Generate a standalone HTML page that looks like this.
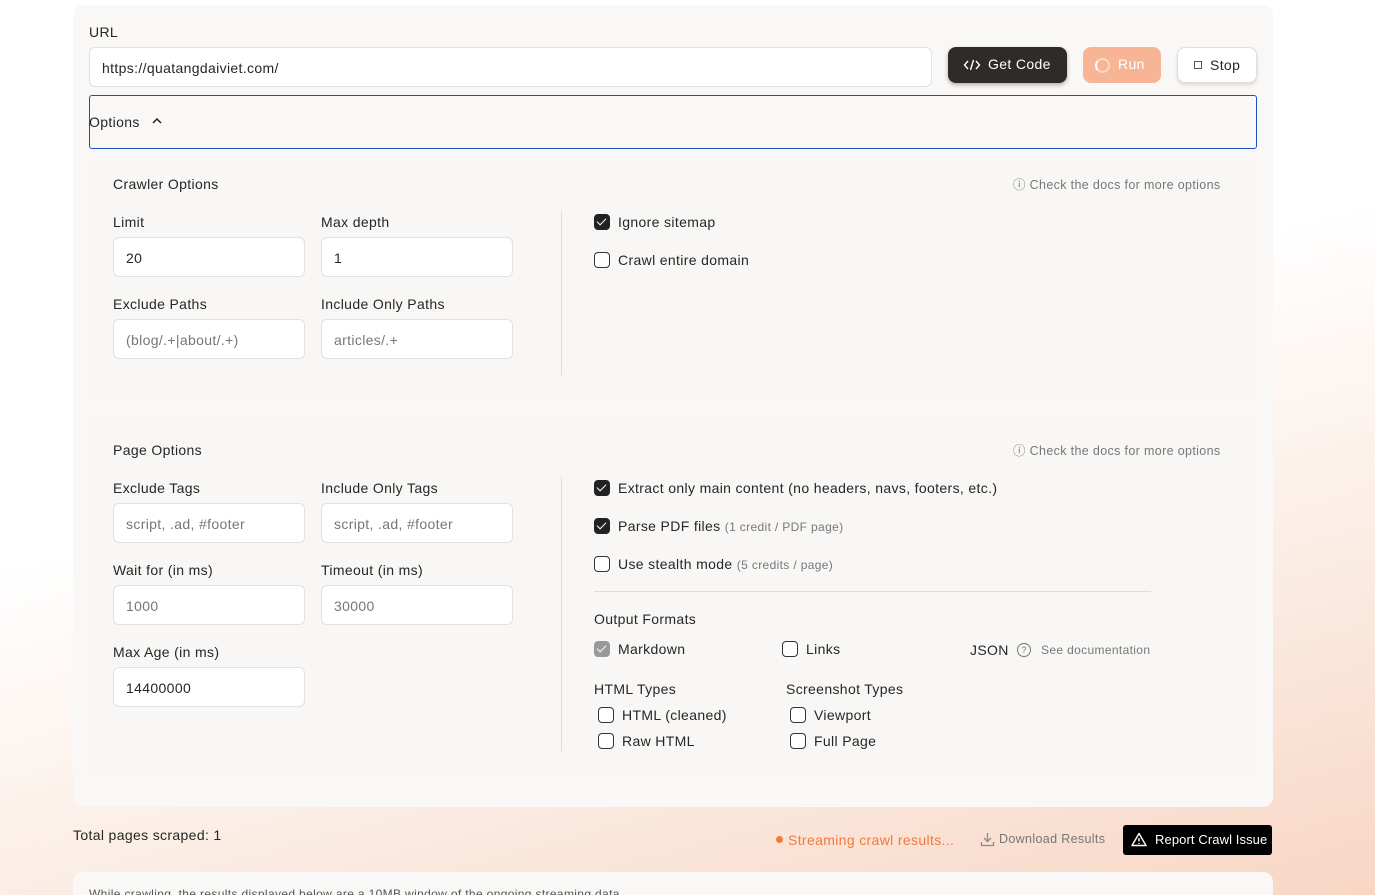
<!DOCTYPE html>
<html><head><meta charset="utf-8"><style>
*{box-sizing:border-box;margin:0;padding:0}
html{width:1375px;height:895px;overflow:hidden}
body{width:1375px;height:895px;overflow:hidden;font-family:"Liberation Sans",sans-serif;color:#262626;font-size:14px;position:relative;letter-spacing:0.35px;
background:linear-gradient(165deg,#fff 0%,#fff 45%,#fbeee6 70%,#f8d6c4 100%);}
.a{position:absolute}
.card{background:#f9f8f6;border-radius:10px}
.sec{background:#f8f7f5;border-radius:8px}
.inp{position:absolute;background:#fff;border:1px solid #e3e1df;border-radius:6px;height:40px;padding:0 12px;line-height:40px;font-size:14px;color:#262626}
.ph{color:#777}
.cb{position:absolute;width:16px;height:16px;border:1.5px solid #333;border-radius:4px;background:#fff}
.cb.on{background:#222;border-color:#222}
.cb.on::after{content:"";position:absolute;left:4px;top:1px;width:4px;height:8px;border:solid #fff;border-width:0 1.5px 1.5px 0;transform:rotate(45deg)}
.cb.gr{background:#999;border-color:#999}
.cb.gr::after{content:"";position:absolute;left:4px;top:1px;width:4px;height:8px;border:solid #fff;border-width:0 1.5px 1.5px 0;transform:rotate(45deg)}
.t{position:absolute;white-space:nowrap;font-size:14px}
.s{color:#777;font-size:12px}
.d{color:#777;font-size:12.5px}
</style></head><body>
<div class="a card" style="left:73px;top:5px;width:1200px;height:802px"></div>
<div class="t" style="left:89px;top:24px">URL</div>
<div class="inp" style="left:89px;top:47px;width:843px">https://quatangdaiviet.com/</div>
<div class="a" style="left:948px;top:47px;width:119px;height:36px;background:#2f2b28;border-radius:8px;color:#fff;box-shadow:0 2px 4px rgba(0,0,0,.3)">
<svg class="a" style="left:15px;top:11px" width="18" height="14"><path d="M5 3 L1.5 7 L5 11 M13 3 L16.5 7 L13 11 M10.5 2 L7.5 12" stroke="#fff" stroke-width="1.4" fill="none"/></svg>
<span class="t" style="left:40px;top:9px;color:#fff">Get Code</span></div>
<div class="a" style="left:1083px;top:47px;width:78px;height:36px;background:#f7b595;border-radius:8px"><div class="a" style="left:12px;top:11px;width:15px;height:15px;border:2.5px solid #fbd8c8;border-left-color:#fff;border-radius:50%"></div><span class="t" style="left:35px;top:9px;color:#fff">Run</span></div>
<div class="a" style="left:1177px;top:47px;width:80px;height:36px;background:#fff;border:1px solid #e2ddd9;border-radius:8px;box-shadow:0 2px 3px rgba(0,0,0,.12)"><div class="a" style="left:16px;top:13px;width:8px;height:8px;border:1px solid #555"></div><span class="t" style="left:32px;top:9px">Stop</span></div>
<div class="a" style="left:89px;top:95px;width:1168px;height:54px;border:1.5px solid #1d4fc4;border-radius:3px"></div>
<div class="t" style="left:89px;top:114px">Options</div>
<svg class="a" style="left:151px;top:117px" width="12" height="8"><path d="M2 6 L6 2 L10 6" stroke="#222" stroke-width="1.5" fill="none"/></svg>

<div class="a sec" style="left:89px;top:160px;width:1168px;height:238px"></div>
<div class="t" style="left:113px;top:176px">Crawler Options</div>
<div class="t d" style="left:1013px;top:174px">&#9432; Check the docs for more options</div>
<div class="t" style="left:113px;top:214px">Limit</div><div class="t" style="left:321px;top:214px">Max depth</div>
<div class="inp" style="left:113px;top:237px;width:192px">20</div><div class="inp" style="left:321px;top:237px;width:192px">1</div>
<div class="t" style="left:113px;top:296px">Exclude Paths</div><div class="t" style="left:321px;top:296px">Include Only Paths</div>
<div class="inp ph" style="left:113px;top:319px;width:192px">(blog/.+|about/.+)</div><div class="inp ph" style="left:321px;top:319px;width:192px">articles/.+</div>
<div class="a" style="left:561px;top:211px;width:1px;height:164px;background:#ddd"></div>
<div class="cb on" style="left:594px;top:214px"></div><div class="t" style="left:618px;top:214px">Ignore sitemap</div>
<div class="cb" style="left:594px;top:252px"></div><div class="t" style="left:618px;top:252px">Crawl entire domain</div>

<div class="a sec" style="left:89px;top:415px;width:1168px;height:361px"></div>
<div class="t" style="left:113px;top:442px">Page Options</div>
<div class="t d" style="left:1013px;top:440px">&#9432; Check the docs for more options</div>
<div class="t" style="left:113px;top:480px">Exclude Tags</div><div class="t" style="left:321px;top:480px">Include Only Tags</div>
<div class="inp ph" style="left:113px;top:503px;width:192px">script, .ad, #footer</div><div class="inp ph" style="left:321px;top:503px;width:192px">script, .ad, #footer</div>
<div class="t" style="left:113px;top:562px">Wait for (in ms)</div><div class="t" style="left:321px;top:562px">Timeout (in ms)</div>
<div class="inp ph" style="left:113px;top:585px;width:192px">1000</div><div class="inp ph" style="left:321px;top:585px;width:192px">30000</div>
<div class="t" style="left:113px;top:644px">Max Age (in ms)</div>
<div class="inp" style="left:113px;top:667px;width:192px">14400000</div>
<div class="a" style="left:561px;top:477px;width:1px;height:274px;background:#ddd"></div>
<div class="cb on" style="left:594px;top:480px"></div><div class="t" style="left:618px;top:480px">Extract only main content (no headers, navs, footers, etc.)</div>
<div class="cb on" style="left:594px;top:518px"></div><div class="t" style="left:618px;top:518px">Parse PDF files <span class="s">(1 credit / PDF page)</span></div>
<div class="cb" style="left:594px;top:556px"></div><div class="t" style="left:618px;top:556px">Use stealth mode <span class="s">(5 credits / page)</span></div>
<div class="a" style="left:594px;top:591px;width:557px;height:1px;background:#ddd"></div>
<div class="t" style="left:594px;top:611px">Output Formats</div>
<div class="cb gr" style="left:594px;top:641px"></div><div class="t" style="left:618px;top:641px">Markdown</div>
<div class="cb" style="left:782px;top:641px"></div><div class="t" style="left:806px;top:641px">Links</div>
<div class="t" style="left:970px;top:642px">JSON</div>
<div class="a" style="left:1017px;top:643px;width:14px;height:14px;border:1.2px solid #777;border-radius:50%;font-size:9px;text-align:center;line-height:12px;color:#777;letter-spacing:0">?</div>
<div class="t s" style="left:1041px;top:643px">See documentation</div>
<div class="t" style="left:594px;top:681px">HTML Types</div><div class="t" style="left:786px;top:681px">Screenshot Types</div>
<div class="cb" style="left:598px;top:707px"></div><div class="t" style="left:622px;top:707px">HTML (cleaned)</div>
<div class="cb" style="left:598px;top:733px"></div><div class="t" style="left:622px;top:733px">Raw HTML</div>
<div class="cb" style="left:790px;top:707px"></div><div class="t" style="left:814px;top:707px">Viewport</div>
<div class="cb" style="left:790px;top:733px"></div><div class="t" style="left:814px;top:733px">Full Page</div>

<div class="t" style="left:73px;top:827px">Total pages scraped: 1</div>
<div class="a" style="left:776px;top:836px;width:7px;height:7px;border-radius:50%;background:#f07a3e"></div>
<div class="t" style="left:788px;top:832px;color:#f07a3e">Streaming crawl results...</div>
<svg class="a" style="left:980px;top:832px" width="15" height="15"><path d="M7.5 1 V9 M4 6 L7.5 9.5 L11 6 M1.5 10 V13.5 H13.5 V10" stroke="#888" stroke-width="1.3" fill="none"/></svg>
<div class="t" style="left:999px;top:832px;color:#777;font-size:12.5px">Download Results</div>
<div class="a" style="left:1123px;top:825px;width:149px;height:30px;background:#000;border-radius:3px">
<svg class="a" style="left:8px;top:7px" width="16" height="15"><path d="M8 1.5 L15 13.5 H1 Z M8 6 V9.5 M8 11 V12" stroke="#fff" stroke-width="1.4" fill="none" stroke-linejoin="round"/></svg>
<span class="t" style="left:32px;top:7px;color:#fff;font-size:13px;letter-spacing:0.1px">Report Crawl Issue</span></div>
<div class="a card" style="left:73px;top:872px;width:1200px;height:40px"></div>
<div class="t" style="left:89px;top:887px;font-size:12px;color:#555">While crawling, the results displayed below are a 10MB window of the ongoing streaming data</div>
</body></html>
